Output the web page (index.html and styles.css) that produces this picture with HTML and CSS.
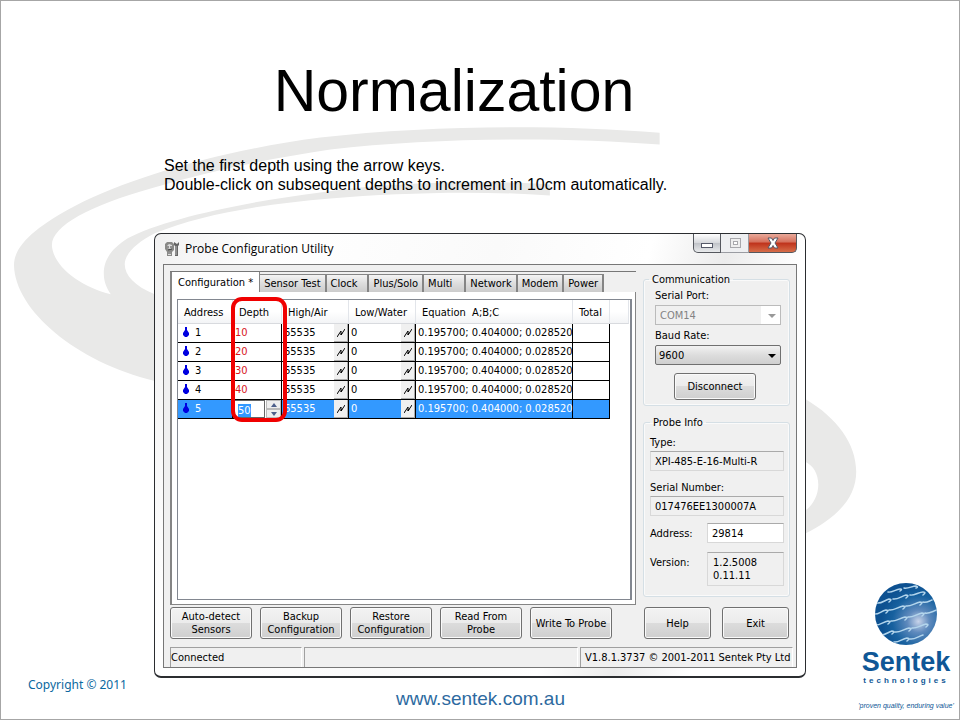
FILE: index.html
```html
<!DOCTYPE html>
<html lang="en">
<head>
<meta charset="utf-8">
<title>Normalization</title>
<link rel="stylesheet" href="styles.css">
</head>
<body>
<main class="slide">
  <svg class="swirl" viewBox="0 0 960 720" preserveAspectRatio="none" aria-hidden="true">
    <path d="M660 132C560 124 430 124 320 137C220 150 130 177 75 205C35 226 13 245 13 265C14 310 75 362 154 381L400 450L400 300L154 294C134 286 124 275 124 264C124 254 135 243 154 233C200 214 260 204 330 198C400 192 480 190 550 195L550 184C480 179 390 182 320 192C240 202 160 220 127 238C108 250 103 262 103 273C103 282 106 288 110 294C80 287 52 266 51 245C51 225 90 205 150 188C210 170 270 158 330 149C430 137 560 136 660 144Z"/>
    <path d="M740 365L806 399C838 418 857 444 857 472C857 498 838 518 806 534L740 560L740 540L806 511C814 505 819 495 819 485C819 474 814 466 806 462L740 430Z"/>
  </svg>
  <h1 class="title">Normalization</h1>
  <p class="lead">Set the first depth using the arrow keys.<br>Double-click on subsequent depths to increment in 10cm automatically.</p>

  <section class="window">
    <header class="titlebar">
      <svg class="app-icon" viewBox="0 0 16 16" aria-hidden="true">
        <path d="M1 3L3 1H8L10 3V9L8 11V15H3V11L1 8Z" fill="#8a8a88"/>
        <path d="M3 5L5 3L8 4V7L6 8L3 7ZM4 11H7V14H4Z" fill="#ddd"/>
        <path d="M3 6H5M6 6H8M4 9L8 8M4 12H7" stroke="#444"/>
        <path d="M10 1V4L11 5V15H14V5L15 4V1L13 3Z" fill="#666"/>
        <path d="M12 5V14" stroke="#bbb"/>
      </svg>
      <span class="window-name">Probe Configuration Utility</span>
      <div class="window-controls">
        <button class="control" aria-label="Minimize"><svg viewBox="0 0 14 12"><rect x="1.500" y="6.500" width="11" height="4" fill="#fff" stroke="#555968"/></svg></button>
        <button class="control dim" aria-label="Maximize"><svg viewBox="0 0 14 12"><rect x="2.500" y="1.500" width="10" height="9" fill="#eee" stroke="#a8a8ac"/><rect x="5.500" y="4.500" width="4" height="3" fill="#fff" stroke="#a8a8ac"/></svg></button>
        <button class="control close" aria-label="Close"><svg viewBox="0 0 14 12"><path d="M2 1H5.500L7 3.500L8.500 1H12L9 6L12 11H8.500L7 8.500L5.500 11H2L5 6Z" fill="#fff" stroke="#555968"/></svg></button>
      </div>
    </header>

    <div class="client">
      <div class="workspace">
        <div class="tabs-area">
          <nav class="tabs">
            <button class="tab active">Configuration *</button>
            <button class="tab">Sensor Test</button>
            <button class="tab clock">Clock</button>
            <button class="tab">Plus/Solo</button>
            <button class="tab multi">Multi</button>
            <button class="tab">Network</button>
            <button class="tab">Modem</button>
            <button class="tab">Power</button>
          </nav>
          <div class="tab-panel">
            <div class="list">
              <table class="sensors">
                <colgroup><col class="c-address"><col class="c-depth"><col class="c-high"><col class="c-low"><col class="c-equation"><col class="c-total"><col></colgroup>
                <thead><tr><th>Address</th><th>Depth</th><th>High/Air</th><th>Low/Water</th><th>Equation&nbsp; A;B;C</th><th>Total</th><th></th></tr></thead>
                <tbody>
                  <tr><td><div class="cell"><svg class="drop" viewBox="0 0 6 10"><path d="M2 0H4V3L6 6V8L4 10H2L0 8V6L2 3Z"/></svg>1</div></td><td class="depth">10</td><td><div class="cell">65535<button class="pick" aria-label="Read high"><svg viewBox="0 0 8 8"><path d="M0 8L4 2V6L8 0M4 6L5 4"/></svg></button></div></td><td><div class="cell">0<button class="pick" aria-label="Read low"><svg viewBox="0 0 8 8"><path d="M0 8L4 2V6L8 0M4 6L5 4"/></svg></button></div></td><td>0.195700; 0.404000; 0.028520</td><td></td><td class="rest"></td></tr>
                  <tr><td><div class="cell"><svg class="drop" viewBox="0 0 6 10"><path d="M2 0H4V3L6 6V8L4 10H2L0 8V6L2 3Z"/></svg>2</div></td><td class="depth">20</td><td><div class="cell">65535<button class="pick" aria-label="Read high"><svg viewBox="0 0 8 8"><path d="M0 8L4 2V6L8 0M4 6L5 4"/></svg></button></div></td><td><div class="cell">0<button class="pick" aria-label="Read low"><svg viewBox="0 0 8 8"><path d="M0 8L4 2V6L8 0M4 6L5 4"/></svg></button></div></td><td>0.195700; 0.404000; 0.028520</td><td></td><td class="rest"></td></tr>
                  <tr><td><div class="cell"><svg class="drop" viewBox="0 0 6 10"><path d="M2 0H4V3L6 6V8L4 10H2L0 8V6L2 3Z"/></svg>3</div></td><td class="depth">30</td><td><div class="cell">65535<button class="pick" aria-label="Read high"><svg viewBox="0 0 8 8"><path d="M0 8L4 2V6L8 0M4 6L5 4"/></svg></button></div></td><td><div class="cell">0<button class="pick" aria-label="Read low"><svg viewBox="0 0 8 8"><path d="M0 8L4 2V6L8 0M4 6L5 4"/></svg></button></div></td><td>0.195700; 0.404000; 0.028520</td><td></td><td class="rest"></td></tr>
                  <tr><td><div class="cell"><svg class="drop" viewBox="0 0 6 10"><path d="M2 0H4V3L6 6V8L4 10H2L0 8V6L2 3Z"/></svg>4</div></td><td class="depth">40</td><td><div class="cell">65535<button class="pick" aria-label="Read high"><svg viewBox="0 0 8 8"><path d="M0 8L4 2V6L8 0M4 6L5 4"/></svg></button></div></td><td><div class="cell">0<button class="pick" aria-label="Read low"><svg viewBox="0 0 8 8"><path d="M0 8L4 2V6L8 0M4 6L5 4"/></svg></button></div></td><td>0.195700; 0.404000; 0.028520</td><td></td><td class="rest"></td></tr>
                  <tr class="selected"><td><div class="cell"><svg class="drop" viewBox="0 0 6 10"><path d="M2 0H4V3L6 6V8L4 10H2L0 8V6L2 3Z"/></svg>5</div></td><td class="editing"><div class="editor"><input class="depth-input" value="50" aria-label="Depth"><span class="spinner"><button aria-label="Increase"><svg viewBox="0 0 6 4"><path d="M0 4L3 0L6 4Z"/></svg></button><button aria-label="Decrease"><svg viewBox="0 0 6 4"><path d="M0 0H6L3 4Z"/></svg></button></span></div></td><td><div class="cell">65535<button class="pick" aria-label="Read high"><svg viewBox="0 0 8 8"><path d="M0 8L4 2V6L8 0M4 6L5 4"/></svg></button></div></td><td><div class="cell">0<button class="pick" aria-label="Read low"><svg viewBox="0 0 8 8"><path d="M0 8L4 2V6L8 0M4 6L5 4"/></svg></button></div></td><td>0.195700; 0.404000; 0.028520</td><td></td><td class="rest"></td></tr>
                </tbody>
              </table>
              <div class="highlight"></div>
            </div>
          </div>
        </div>

        <aside class="side">
          <fieldset class="group comm">
            <legend>Communication</legend>
            <label for="port">Serial Port:</label>
            <div class="select-wrap"><select id="port" disabled><option>COM14</option></select></div>
            <label for="baud">Baud Rate:</label>
            <div class="select-wrap"><select id="baud"><option>9600</option></select></div>
            <button class="btn disconnect">Disconnect</button>
          </fieldset>
          <fieldset class="group info">
            <legend>Probe Info</legend>
            <label for="type">Type:</label>
            <input id="type" value="XPI-485-E-16-Multi-R" readonly>
            <label for="serial">Serial Number:</label>
            <input id="serial" value="017476EE1300007A" readonly>
            <div class="field"><label for="address">Address:</label><input id="address" class="editable" value="29814"></div>
            <div class="field"><label for="version">Version:</label><textarea id="version" rows="2" readonly>1.2.5008
0.11.11</textarea></div>
          </fieldset>
        </aside>
      </div>

      <div class="actions">
        <button class="btn">Auto-detect<br>Sensors</button>
        <button class="btn">Backup<br>Configuration</button>
        <button class="btn">Restore<br>Configuration</button>
        <button class="btn">Read From<br>Probe</button>
        <button class="btn">Write To Probe</button>
        <div class="exits"><button class="btn">Help</button><button class="btn">Exit</button></div>
      </div>

      <footer class="status">
        <span>Connected</span><span></span><span>V1.8.1.3737 © 2001-2011 Sentek Pty Ltd</span>
      </footer>
    </div>
  </section>

  <footer class="slide-footer">
    <span class="copyright">Copyright © 2011</span>
    <a class="site" href="#">www.sentek.com.au</a>
  </footer>

  <div class="brand">
    <svg class="globe" viewBox="0 0 64 64" aria-hidden="true">
      <defs>
        <radialGradient id="ball" cx="0.7" cy="0.62" r="0.6"><stop offset="0" stop-color="#c8d4ea"/><stop offset="0.3" stop-color="#5f8abd"/><stop offset="0.7" stop-color="#17619f"/><stop offset="1" stop-color="#0d5191"/></radialGradient>
        <clipPath id="disc"><circle cx="32" cy="32" r="31"/></clipPath>
      </defs>
      <circle cx="32" cy="32" r="31" fill="url(#ball)"/>
      <g clip-path="url(#disc)" fill="none" stroke="#b3d5ec" stroke-width="1.500" stroke-linecap="round">
        <path d="M14 10c4 1 8-3 12-3q3 0 0 2M30 6c4 1 8-2 12-2q3 1 0 2M3 21c4 1 8-3 12-4q4 0 0 3M19 17c4 1 9-3 13-4q4 0 0 3M36 13c4 1 9-3 13-3q4 0 0 3M0 32c4 1 7-3 12-4q4 0 0 3M15 28c4 1 9-3 14-4q4 0 0 3M32 24c4 1 9-3 14-4q4 0 0 3M49 20c4 1 6-1 9-2M1 43c4 1 8-3 13-4q4 0 0 3M17 39c4 1 9-3 14-4q4 0 0 3M34 35c4 1 9-3 14-4q4 0 0 3M51 31c4 1 8-2 12-3M6 53c4 1 8-3 12-4q4 0 0 3M21 50c4 1 9-3 14-4q4 0 0 3M38 46c4 1 9-3 14-4q4 0 0 3M20 60c4 1 8-3 13-4q4 0 0 3M36 57c4 1 9-3 13-4"/>
      </g>
    </svg>
    <strong class="brand-name">Sentek</strong>
    <span class="brand-sub">technologies</span>
    <em class="motto">'proven quality, enduring value'</em>
  </div>
</main>
<script src="script.js"></script>
</body>
</html>
```
FILE: script.js
```
const depth = document.querySelector('.depth-input');
depth.focus();
depth.select();
```
FILE: styles.css
```css
* { box-sizing: border-box; }
body { margin: 0; font-family: "Liberation Sans", Arial, sans-serif; color: #000; background: #fff; }
button, input, select, textarea { font: inherit; color: inherit; margin: 0; border-radius: 0; }
button { padding: 0; }

.slide { position: relative; isolation: isolate; display: flex; flex-direction: column; min-height: 100vh; padding: 0 154px; border: 1px solid #a6a6a6; }
.swirl { position: absolute; inset: 0; z-index: -1; width: 100%; height: 100%; fill: #e9e9e8; }
.title { margin: 56px 52px 0 0; font-size: 59px; line-height: 68px; font-weight: 400; text-align: center; }
.lead { margin: 31px 9px 0; font-size: 16px; line-height: 19px; white-space: nowrap; }

.window { display: flex; flex-direction: column; flex: 1; margin: 39px -1px 0; padding: 0 8px 8px; border: 1px solid #2b2d30; border-bottom-width: 2px; border-radius: 7px; background: linear-gradient(105deg, #f1f1f1, #fff 15%, #fafafa 45%, #fff 65%, #ececec 75%, #fff 85%); font: 11px/13px "DejaVu Sans Condensed", "DejaVu Sans", sans-serif; }
.titlebar { display: flex; align-items: flex-start; height: 30px; }
.app-icon { width: 16px; height: 16px; margin: 7px 5px 0 1px; }
.window-name { flex: 1; font: 12px/30px "Open Sans", "Noto Sans", sans-serif; }
.window-controls { display: flex; }
.control { display: flex; align-items: center; justify-content: center; width: 28px; height: 19px; border: 1px solid #55585e; border-top: 0; border-left-width: 0; background: linear-gradient(#fff, #d5d7db 50%, #bfc2c7 50%, #e8eaec); }
.control:first-child { border-left-width: 1px; border-bottom-left-radius: 5px; }
.control svg { width: 14px; height: 12px; }
.control.dim { background: #eeeff1; border-color: #9a9ca2; }
.control.close { width: 48px; border-bottom-right-radius: 5px; background: linear-gradient(#e9a99a, #d5705c 45%, #bf321b 50%, #d66d49); }

.client { display: flex; flex-direction: column; flex: 1; padding: 6px 3px 0 6px; border: 1px solid #777; background: #f0f0f0; }
.workspace { display: flex; flex: 1; gap: 7px; padding-right: 3px; }
.tabs-area { display: flex; flex-direction: column; flex: 1; border-top: 1px solid #777; }
.tabs { display: flex; align-items: flex-end; height: 20px; }
.tab { flex: none; height: 18px; padding: 0 4px; border: 1px solid #858585; border-width: 1px 2px 0 0; background: linear-gradient(#f4f4f4, #ddd 50%, #ccc); white-space: nowrap; }
.tab.active { height: 20px; padding: 0 6px; border-width: 0 1px 0 2px; background: #fff; }
.tab.clock { padding-right: 10px; }
.tab.multi { padding-right: 12px; }
.tab-panel { display: flex; flex: 1; padding: 7px 3px 4px 5px; border: 1px solid #858585; border-left-width: 2px; border-top: 0; background: #fff; }
.list { position: relative; flex: 1; padding-right: 1px; border: 1px solid #828790; border-right-width: 2px; }

.sensors { width: 100%; table-layout: fixed; border-collapse: separate; border-spacing: 0; }
.c-address { width: 55px; } .c-depth { width: 49px; } .c-high { width: 67px; } .c-low { width: 67px; } .c-equation { width: 157px; } .c-total { width: 37px; }
.sensors th { height: 24px; padding: 2px 0 0 6px; border-right: 1px solid #e2e5ea; border-bottom: 1px solid #d8dade; background: linear-gradient(#fff 50%, #f3f4f6); font-weight: 400; text-align: left; white-space: nowrap; }
.sensors td { height: 19px; padding: 0 0 2px 2px; border-right: 1px solid #000; border-bottom: 1px solid #000; white-space: nowrap; }
.sensors td.rest { border: 0; background: #fff; }
.sensors td.depth { color: #d8141c; }
.cell { display: flex; align-items: center; justify-content: space-between; height: 16px; }
td:first-child .cell { justify-content: flex-start; gap: 6px; padding-left: 3px; }
.drop { width: 6px; height: 10px; fill: #0000e0; }
.pick { align-self: flex-start; display: flex; align-items: center; justify-content: center; width: 14px; height: 18px; border: 1px solid #aaa; border-width: 0 1px 1px 0; background: #f0f0f0; margin-bottom: -2px; }
.pick svg { width: 8px; height: 8px; fill: none; stroke: #000; stroke-width: 1; }
.selected td { background: #3399ff; color: #fff; }
.sensors td.editing { padding: 0; }
.editor { display: flex; height: 18px; }
.depth-input { flex: 1; min-width: 0; padding: 2px 0 0 4px; border: 1px solid #666; background: #fff; color: #000; outline: 0; }
.depth-input::selection { background: #3399ff; color: #fff; }
.spinner { display: flex; flex-direction: column; width: 16px; padding-left: 1px; background: #fff; }
.spinner button { display: flex; flex: 1; align-items: center; justify-content: center; border: 1px solid #bbb; background: #eee; min-height: 0; }
.spinner svg { width: 6px; height: 4px; fill: #4d5f8a; }
.highlight { position: absolute; left: 53px; top: -3px; width: 56px; height: 125px; border: 4px solid #f00000; border-radius: 11px; pointer-events: none; }

.side { display: flex; flex-direction: column; width: 147px; padding-bottom: 8px; }
.group { display: flex; flex-direction: column; min-width: 0; margin: 0; border: 1px solid #d5dfe5; border-radius: 3px; box-shadow: inset 0 0 0 1px #fafafa; }
.group legend { padding: 0 3px; }
.comm { height: 133px; margin-top: 2px; padding: 3px 8px 0 11px; }
.comm legend { margin-left: -6px; }
.group.info { flex: 1; margin-top: 10px; padding: 7px 5px 0 6px; }
.group label { height: 13px; }
.group select, .group input, .group textarea { display: block; width: 100%; border: 1px solid #d8d8d8; border-top-color: #aaa; outline: 0; background: #f0f0f0; }
.select-wrap { position: relative; margin: 3px 0 4px; }
.select-wrap::after { content: ""; position: absolute; right: 5px; top: 9px; border: 4px solid transparent; border-top-color: #000; border-bottom: 0; }
.group select { height: 20px; padding: 0 3px; appearance: none; border: 1px solid #707070; border-radius: 2px; background: linear-gradient(#f2f2f2, #ddd 50%, #cfcfcf); }
.group select:disabled { padding-left: 4px; border-color: #bbb; border-radius: 0; background: linear-gradient(90deg, #f0f0f0 105px, #fff 105px); color: #838383; opacity: 1; }
.select-wrap:has(select:disabled)::after { border-top-color: #999; }
.group input { height: 20px; padding: 0 4px; }
.info > input { margin: 2px 0 10px; }
.group #serial { margin-bottom: 7px; }
.field { display: grid; grid-template-columns: 57px 1fr; align-items: center; margin-bottom: 9px; }
.group input.editable { background: #fff; }
.group textarea { height: 34px; padding: 3px 5px; resize: none; overflow: hidden; }
.field:last-child { align-items: start; }
.field:last-child label { margin-top: 4px; }

.btn { border: 1px solid #707070; border-radius: 3px; background: linear-gradient(#f3f3f3, #ebebeb 50%, #dcdcdc 50%, #cfcfcf); box-shadow: inset 0 0 0 1px #fafafa; }
.disconnect { width: 82px; height: 27px; margin: 4px 0 0 19px; }
.actions { display: flex; gap: 8px; padding-top: 2px; }
.actions .btn { width: 82px; height: 32px; }
.actions .exits { display: flex; gap: 11px; margin-left: auto; padding-right: 4px; }
.actions .exits .btn { width: 67px; }
.status { display: grid; grid-template-columns: 132px 1fr 213px; gap: 2px; height: 20px; margin: 8px 0 0; }
.status span { padding: 3px 0 0; border: 1px solid #a0a0a0; border-right-color: #fff; border-bottom: 0; white-space: nowrap; }
.status span:last-child { padding-left: 4px; }

.slide-footer { display: flex; height: 41px; margin-left: -127px; align-items: flex-start; }
.copyright { width: 368px; font: 12px/14px "Noto Sans", sans-serif; color: #0a68a0; }
.site { margin-top: 11px; font-size: 19px; line-height: 20px; color: #2d6a9f; text-decoration: none; }
.brand { position: absolute; right: 3px; bottom: 8px; width: 100px; display: flex; flex-direction: column; align-items: center; color: #0f5796; }
.globe { width: 64px; height: 64px; }
.brand-name { margin-top: 3px; font-size: 27px; line-height: 27px; }
.brand-sub { font-size: 8px; line-height: 10px; font-weight: 700; letter-spacing: 3px; }
.motto { margin-top: 15px; font-size: 7px; line-height: 10px; white-space: nowrap; }
```
